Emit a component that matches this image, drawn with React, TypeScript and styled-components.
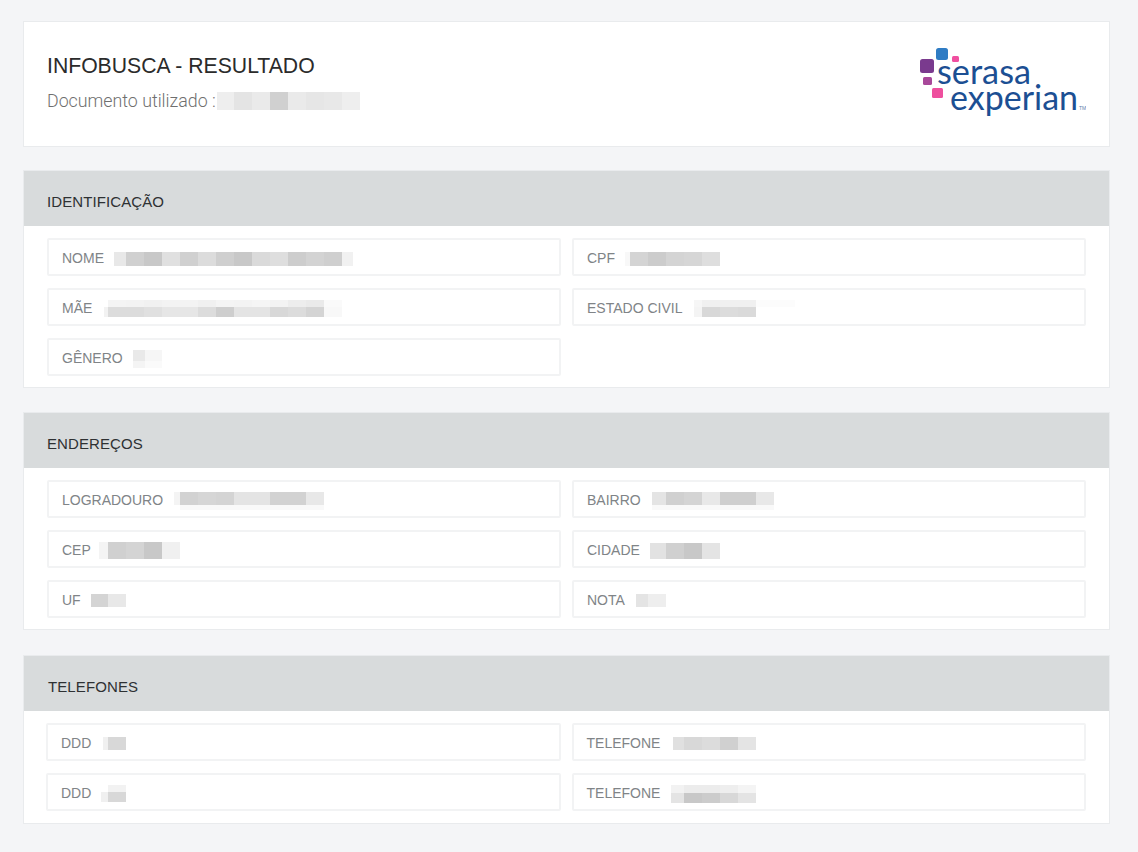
import React from "react";
import styled, { createGlobalStyle } from "styled-components";

// the values are censored in the design, so each one is a row-by-row pixel mosaic
type Cell = [number, string];
interface Blur {
    offset: number
    rows: { height: number; cells: Cell[] }[]
}
interface FieldData {
    label: string
    blur: Blur
}

const GlobalStyle = createGlobalStyle`
    html, body {
        margin: 0;
        padding: 0;
        background-color: #f4f5f7;
    }
    body {
        font-family: "Liberation Sans", Arial, sans-serif;
    }
`
const Page = styled.div`
    display: flex;
    flex-direction: column;
    gap: 24px;
    padding: 21px 28px 28px 23px;
`
const Card = styled.section<{ $nudge?: boolean }>`
    background-color: #fff;
    border: 1px solid #e9ebed;
    ${({ $nudge }) => $nudge ? 'margin-top: 1px;' : ''}
`
const TopCard = styled(Card)`
    display: flex;
    justify-content: space-between;
    align-items: center;
    height: 126px;
    box-sizing: border-box;
    margin-bottom: -1px;
    padding: 0 23px;
`
const TitleBlock = styled.div`
    display: flex;
    flex-direction: column;
    gap: 10px;
    padding-bottom: 3px;
`
const Title = styled.div`
    font-size: 21.2px;
    line-height: 26px;
    color: #2b2b2b;
`
const DocLine = styled.div`
    display: flex;
    align-items: center;
    font-family: "Roboto", "Liberation Sans", sans-serif;
    font-weight: 300;
    font-size: 17.8px;
    line-height: 24px;
    color: #6f6f6f;
`
const Logo = styled.svg`
    display: block;
    width: 170px;
    height: 76px;
`
const LogoWord = styled.text`
    font-family: "Lato", "Liberation Sans", sans-serif;
    font-size: 34px;
    fill: #1c4f93;
`
const LogoMark = styled.text`
    font-family: "Liberation Sans", sans-serif;
    font-size: 5px;
    fill: #5c7fae;
`
const SectionHeader = styled.div<{ $nudge?: boolean }>`
    display: flex;
    align-items: center;
    height: 55px;
    padding: 5px 23px 0 ${({ $nudge }) => $nudge ? 24 : 23}px;
    box-sizing: border-box;
    background-color: #d8dbdc;
    font-size: 15px;
    letter-spacing: 0.1px;
    color: #2e3133;
`
const Fields = styled.div<{ $nudge?: boolean }>`
    display: grid;
    grid-template-columns: 1fr 1fr;
    gap: 12px 11px;
    padding: ${({ $nudge }) => $nudge ? '12px 23px 12px 22px' : '12px 23px 11px 23px'};
`
const FieldBox = styled.div`
    display: flex;
    align-items: center;
    height: 38px;
    box-sizing: border-box;
    padding: 3px 13px 0;
    border: 2px solid #f2f3f4;
    border-radius: 2px;
`
const Label = styled.span`
    margin-bottom: 2px;
    font-size: 14px;
    color: #808487;
`
const Mosaic = styled.div<{ $offset: number }>`
    display: flex;
    flex-direction: column;
    margin-left: ${({ $offset }) => $offset}px;
`
const MosaicRow = styled.div<{ $height: number }>`
    display: flex;
    height: ${({ $height }) => $height}px;
`
const MosaicCell = styled.div<{ $width: number; $color: string }>`
    width: ${({ $width }) => $width}px;
    background-color: ${({ $color }) => $color};
`

const one = (offset: number, height: number, cells: Cell[]): Blur => ({
    offset,
    rows: [{ height, cells }],
})

const identificacao: FieldData[] = [
    {
        label: "NOME",
        blur: one(10, 14, [[12, "#e8e8e8"], [18, "#d0d0d0"], [18, "#c8c8c8"], [18, "#e0e0e0"], [18, "#d0d0d0"], [18, "#dcdcdc"], [18, "#cfcfcf"], [18, "#c8c8c8"], [18, "#dadada"], [18, "#dedede"], [18, "#cdcdcd"], [18, "#d3d3d3"], [18, "#cfcfcf"], [11, "#f1f1f1"]]),
    },
    {
        label: "CPF",
        blur: one(10, 14, [[5, "#f8f8f8"], [18, "#d4d4d4"], [18, "#cccccc"], [18, "#d4d4d4"], [18, "#d6d6d6"], [18, "#dedede"]]),
    },
    {
        label: "MÃE",
        blur: {
            offset: 12,
            rows: [
                { height: 7, cells: [[4, "#ffffff"], [18, "#f4f4f4"], [18, "#f3f3f3"], [18, "#f1f1f1"], [18, "#f3f3f3"], [18, "#f3f3f3"], [18, "#f0f0f0"], [18, "#f4f4f4"], [18, "#f3f3f3"], [18, "#f5f5f5"], [18, "#f3f3f3"], [18, "#ededed"], [18, "#eaeaea"], [18, "#fafafa"]] },
                { height: 10, cells: [[4, "#f2f2f2"], [36, "#dcdcdc"], [18, "#e0e0e0"], [18, "#e6e6e6"], [18, "#e6e6e6"], [18, "#dcdcdc"], [18, "#cecece"], [18, "#e4e4e4"], [18, "#e4e4e4"], [18, "#d8d8d8"], [18, "#dcdcdc"], [18, "#d4d4d4"], [18, "#f8f8f8"]] },
            ],
        },
    },
    {
        label: "ESTADO CIVIL",
        blur: {
            offset: 12,
            rows: [
                { height: 7, cells: [[8, "#f6f6f6"], [54, "#f0f0f0"], [39, "#fcfcfc"]] },
                { height: 10, cells: [[8, "#f4f4f4"], [18, "#d8d8d8"], [18, "#dcdcdc"], [18, "#dadada"]] },
            ],
        },
    },
    {
        label: "GÊNERO",
        blur: {
            offset: 10,
            rows: [
                { height: 11, cells: [[12, "#e9e9e9"], [17, "#f6f6f6"]] },
                { height: 7, cells: [[12, "#f4f4f4"], [17, "#fafafa"]] },
            ],
        },
    },
]

const enderecos: FieldData[] = [
    {
        label: "LOGRADOURO",
        blur: {
            offset: 11,
            rows: [
                { height: 13, cells: [[6, "#f4f4f4"], [18, "#d2d2d2"], [18, "#d6d6d6"], [18, "#d4d4d4"], [18, "#e4e4e4"], [18, "#e4e4e4"], [18, "#d2d2d2"], [18, "#d2d2d2"], [18, "#e8e8e8"]] },
                { height: 5, cells: [[6, "#ffffff"], [144, "#f9f9f9"]] },
            ],
        },
    },
    {
        label: "BAIRRO",
        blur: {
            offset: 11,
            rows: [
                { height: 13, cells: [[14, "#e4e4e4"], [18, "#d0d0d0"], [18, "#d4d4d4"], [18, "#e8e8e8"], [18, "#cfcfcf"], [18, "#cfcfcf"], [18, "#e8e8e8"]] },
                { height: 5, cells: [[122, "#f9f9f9"]] },
            ],
        },
    },
    {
        label: "CEP",
        blur: one(8, 17, [[9, "#f4f4f4"], [18, "#d0d0d0"], [18, "#d4d4d4"], [18, "#c8c8c8"], [18, "#f0f0f0"]]),
    },
    {
        label: "CIDADE",
        blur: one(10, 16, [[16, "#e2e2e2"], [18, "#d0d0d0"], [18, "#c8c8c8"], [18, "#e4e4e4"]]),
    },
    {
        label: "UF",
        blur: one(10, 13, [[17, "#d4d4d4"], [18, "#e8e8e8"]]),
    },
    {
        label: "NOTA",
        blur: one(11, 13, [[12, "#e4e4e4"], [18, "#eeeeee"]]),
    },
]

const telefones: FieldData[] = [
    {
        label: "DDD",
        blur: one(12, 13, [[5, "#f0f0f0"], [18, "#d8d8d8"]]),
    },
    {
        label: "TELEFONE",
        blur: one(13, 13, [[11, "#e0e0e0"], [18, "#d8d8d8"], [18, "#dcdcdc"], [18, "#d0d0d0"], [18, "#e4e4e4"]]),
    },
    {
        label: "DDD",
        blur: {
            offset: 10,
            rows: [
                { height: 7, cells: [[7, "#ffffff"], [18, "#f2f2f2"]] },
                { height: 10, cells: [[7, "#f0f0f0"], [18, "#d8d8d8"]] },
            ],
        },
    },
    {
        label: "TELEFONE",
        blur: {
            offset: 11,
            rows: [
                { height: 8, cells: [[13, "#f2f2f2"], [36, "#ececec"], [18, "#eeeeee"], [18, "#f4f4f4"]] },
                { height: 10, cells: [[13, "#e4e4e4"], [18, "#c8c8c8"], [18, "#cccccc"], [18, "#d8d8d8"], [18, "#e4e4e4"]] },
            ],
        },
    },
]

const documento = one(1, 18, [[17, "#eeeeee"], [18, "#e4e4e4"], [18, "#eaeaea"], [18, "#d0d0d0"], [18, "#eaeaea"], [18, "#e6e6e6"], [18, "#e8e8e8"], [18, "#eeeeee"]])

const BlurredValue: React.FC<{ blur: Blur }> = ({ blur }) => (
    <Mosaic $offset={blur.offset}>
        {blur.rows.map((row, r) => (
            <MosaicRow key={r} $height={row.height}>
                {row.cells.map(([width, color], c) => (
                    <MosaicCell key={c} $width={width} $color={color} />
                ))}
            </MosaicRow>
        ))}
    </Mosaic>
)

const SerasaLogo: React.FC = () => (
    <Logo viewBox="0 0 170 76">
        <rect x="20" y="2" width="12" height="12" rx="2.5" fill="#2f7cc4" />
        <rect x="36" y="10" width="7" height="6" rx="1.5" fill="#f04fa0" />
        <rect x="4" y="13" width="14" height="14" rx="2.5" fill="#7a3a8e" />
        <rect x="7" y="31" width="9" height="8" rx="1.5" fill="#a8489a" />
        <rect x="16" y="42" width="11" height="10" rx="1.5" fill="#ee4f9e" />
        <LogoWord x="21" y="38" textLength="94" lengthAdjust="spacingAndGlyphs">serasa</LogoWord>
        <LogoWord x="34" y="64" textLength="128" lengthAdjust="spacingAndGlyphs">experian</LogoWord>
        <LogoMark x="163" y="64">TM</LogoMark>
    </Logo>
)

const Section: React.FC<{ title: string; fields: FieldData[]; nudge?: boolean }> = ({ title, fields, nudge }) => (
    <Card $nudge={nudge}>
        <SectionHeader $nudge={nudge}>{title}</SectionHeader>
        <Fields $nudge={nudge}>
            {fields.map((field, i) => (
                <FieldBox key={i}>
                    <Label>{field.label}</Label>
                    <BlurredValue blur={field.blur} />
                </FieldBox>
            ))}
        </Fields>
    </Card>
)

export default function App() {
    return (
        <>
            <GlobalStyle />
            <Page>
                <TopCard>
                    <TitleBlock>
                        <Title>INFOBUSCA - RESULTADO</Title>
                        <DocLine>
                            Documento utilizado :
                            <BlurredValue blur={documento} />
                        </DocLine>
                    </TitleBlock>
                    <SerasaLogo />
                </TopCard>
                <Section title="IDENTIFICAÇÃO" fields={identificacao} />
                <Section title="ENDEREÇOS" fields={enderecos} />
                <Section title="TELEFONES" fields={telefones} nudge />
            </Page>
        </>
    )
}
